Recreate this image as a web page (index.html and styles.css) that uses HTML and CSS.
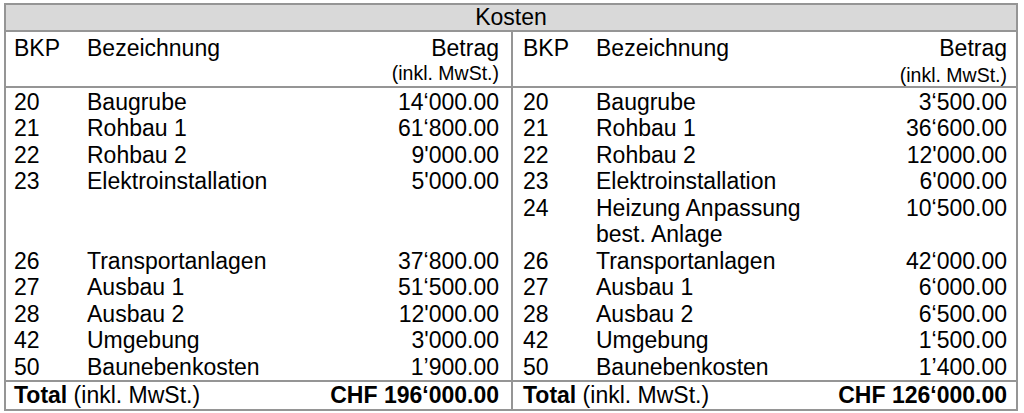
FILE: index.html
```html
<!DOCTYPE html>
<html lang="de">
<head>
<meta charset="utf-8">
<title>Kosten</title>
<link rel="stylesheet" href="styles.css">
</head>
<body>
<div class="page">
<table class="costs">
  <colgroup>
    <col class="c-bkp-l"><col class="c-name-l"><col class="c-amt-l">
    <col class="c-bkp-r"><col class="c-name-r"><col class="c-amt-r">
  </colgroup>
  <thead>
    <tr class="title"><th colspan="6">Kosten</th></tr>
    <tr class="head">
      <th class="bkp-l">BKP</th><th class="name">Bezeichnung</th>
      <th class="amt-l">Betrag<span class="note">(inkl. MwSt.)</span></th>
      <th class="bkp-r">BKP</th><th class="name">Bezeichnung</th>
      <th class="amt-r">Betrag<span class="note note-r">(inkl. MwSt.)</span></th>
    </tr>
  </thead>
  <tbody>
    <tr class="first">
      <td class="bkp-l">20</td><td class="name">Baugrube</td><td class="amt-l">14‘000.00</td>
      <td class="bkp-r">20</td><td class="name">Baugrube</td><td class="amt-r">3‘500.00</td>
    </tr>
    <tr>
      <td class="bkp-l">21</td><td class="name">Rohbau 1</td><td class="amt-l">61‘800.00</td>
      <td class="bkp-r">21</td><td class="name">Rohbau 1</td><td class="amt-r">36‘600.00</td>
    </tr>
    <tr>
      <td class="bkp-l">22</td><td class="name">Rohbau 2</td><td class="amt-l">9'000.00</td>
      <td class="bkp-r">22</td><td class="name">Rohbau 2</td><td class="amt-r">12'000.00</td>
    </tr>
    <tr>
      <td class="bkp-l">23</td><td class="name">Elektroinstallation</td><td class="amt-l">5'000.00</td>
      <td class="bkp-r">23</td><td class="name">Elektroinstallation</td><td class="amt-r">6'000.00</td>
    </tr>
    <tr>
      <td class="bkp-l"></td><td class="name"></td><td class="amt-l"></td>
      <td class="bkp-r">24</td><td class="name">Heizung Anpassung best. Anlage</td><td class="amt-r">10‘500.00</td>
    </tr>
    <tr>
      <td class="bkp-l">26</td><td class="name">Transportanlagen</td><td class="amt-l">37‘800.00</td>
      <td class="bkp-r">26</td><td class="name">Transportanlagen</td><td class="amt-r">42‘000.00</td>
    </tr>
    <tr>
      <td class="bkp-l">27</td><td class="name">Ausbau 1</td><td class="amt-l">51‘500.00</td>
      <td class="bkp-r">27</td><td class="name">Ausbau 1</td><td class="amt-r">6‘000.00</td>
    </tr>
    <tr>
      <td class="bkp-l">28</td><td class="name">Ausbau 2</td><td class="amt-l">12'000.00</td>
      <td class="bkp-r">28</td><td class="name">Ausbau 2</td><td class="amt-r">6‘500.00</td>
    </tr>
    <tr>
      <td class="bkp-l">42</td><td class="name">Umgebung</td><td class="amt-l">3'000.00</td>
      <td class="bkp-r">42</td><td class="name">Umgebung</td><td class="amt-r">1‘500.00</td>
    </tr>
    <tr>
      <td class="bkp-l">50</td><td class="name">Baunebenkosten</td><td class="amt-l">1’900.00</td>
      <td class="bkp-r">50</td><td class="name">Baunebenkosten</td><td class="amt-r">1’400.00</td>
    </tr>
  </tbody>
  <tfoot>
    <tr class="total">
      <td class="bkp-l" colspan="2"><b>Total</b> (inkl. MwSt.)</td><td class="amt-l"><b>CHF 196‘000.00</b></td>
      <td class="bkp-r" colspan="2"><b>Total</b> (inkl. MwSt.)</td><td class="amt-r"><b>CHF 126‘000.00</b></td>
    </tr>
  </tfoot>
</table>
</div>
</body>
</html>
```

FILE: styles.css
```css
html, body {
  margin: 0;
  padding: 0;
  background: #ffffff;
}

.page {
  padding: 3px 0 0 4px;
}

.costs {
  border-collapse: collapse;
  table-layout: fixed;
  width: 1012px;
  font-family: "Liberation Sans", Arial, sans-serif;
  font-size: 23px;
  line-height: 26.5px;
  color: #000;
  border: 2px solid #959595;
}

.c-bkp-l { width: 82px; }
.c-name-l { width: 220px; }
.c-amt-l { width: 205px; }
.c-bkp-r { width: 84px; }
.c-name-r { width: 232px; }
.c-amt-r { width: 189px; }

.costs th,
.costs td {
  padding: 0;
  text-align: left;
  vertical-align: top;
  font-weight: normal;
  white-space: normal;
}

.title th {
  background: #d9d9d9;
  text-align: center;
  height: 25px;
  line-height: 25px;
  border-bottom: 2px solid #959595;
}

.bkp-l { padding-left: 8px !important; }
.bkp-r { padding-left: 10px !important; }
.amt-l {
  text-align: right !important;
  padding-right: 12px !important;
  border-right: 2px solid #959595;
}
.amt-r {
  text-align: right !important;
  padding-right: 9px !important;
}

.head th {
  padding-top: 3px;
  height: 50px;
  border-bottom: 2px solid #959595;
}

.note {
  display: block;
  font-size: 19.5px;
  line-height: 22px;
}

.note-r {
  padding-top: 2px;
}

tbody tr.first td {
  padding-top: 1px;
}

.total td {
  border-top: 2px solid #959595;
  line-height: 27px;
}

.total b {
  font-weight: bold;
}
```
